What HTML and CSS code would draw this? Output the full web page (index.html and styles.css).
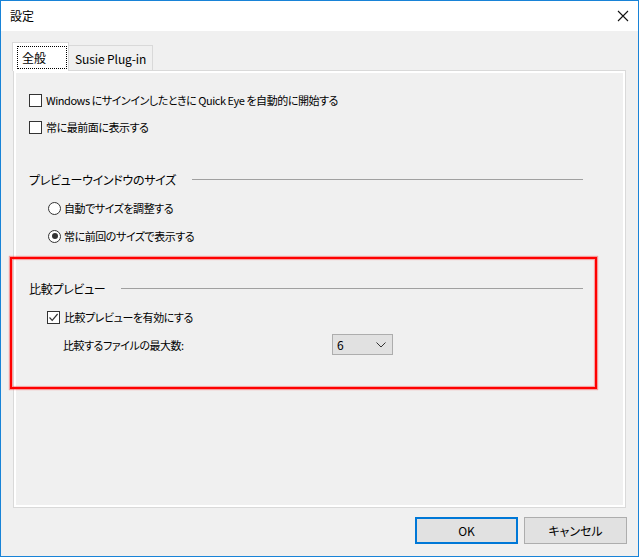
FILE: index.html
```html
<!DOCTYPE html>
<html lang="ja">
<head>
<meta charset="utf-8">
<title>設定</title>
<link rel="stylesheet" href="styles.css">
</head>
<body>
<div class="window">
  <div class="titlebar">
    <span class="title">設定</span>
    <span class="close"><svg width="12" height="12" viewBox="0 0 12 12"><path d="M1 1 L11 11 M11 1 L1 11" stroke="#111" stroke-width="1.1" fill="none"/></svg></span>
  </div>
  <div class="content">
    <div class="tabs">
      <div class="tab active"><span class="focus">全般</span></div>
      <div class="tab">Susie Plug-in</div>
    </div>
    <div class="panel">
      <div class="row first">
        <span class="checkbox"></span>
        <span class="label">Windows にサインインしたときに Quick Eye を自動的に開始する</span>
      </div>
      <div class="row">
        <span class="checkbox"></span>
        <span class="label">常に最前面に表示する</span>
      </div>

      <div class="heading section-gap">
        <span class="heading-text">プレビューウインドウのサイズ</span>
        <span class="rule"></span>
      </div>
      <div class="row sub">
        <span class="radio"></span>
        <span class="label">自動でサイズを調整する</span>
      </div>
      <div class="row sub">
        <span class="radio checked"></span>
        <span class="label">常に前回のサイズで表示する</span>
      </div>

      <div class="heading section-gap">
        <span class="heading-text">比較プレビュー</span>
        <span class="rule"></span>
      </div>
      <div class="row sub">
        <span class="checkbox checked"><svg width="11" height="11" viewBox="0 0 11 11"><path d="M1.5 5.5 L4.2 8.3 L9.6 2" stroke="#333" stroke-width="1.2" fill="none"/></svg></span>
        <span class="label">比較プレビューを有効にする</span>
      </div>
      <div class="row field">
        <span class="field-label">比較するファイルの最大数:</span>
        <span class="select"><span class="select-value">6</span><svg width="10" height="6" viewBox="0 0 10 6"><path d="M0.5 0.5 L5 5 L9.5 0.5" stroke="#333" stroke-width="1" fill="none"/></svg></span>
      </div>
    </div>
    <div class="buttons">
      <button class="btn default">OK</button>
      <button class="btn">キャンセル</button>
    </div>
  </div>
  <div class="highlight"></div>
</div>
</body>
</html>
```

FILE: styles.css
```css
* { box-sizing: border-box; }
html, body {
  margin: 0;
  padding: 0;
  background: #f0f0f0;
}
body {
  font-family: "Noto Sans CJK JP", sans-serif;
  font-feature-settings: "palt" 1;
  font-size: 11px;
  color: #000;
}
.window {
  position: relative;
  width: 639px;
  height: 557px;
  border: 1px solid #1883d7;
  background: #f0f0f0;
  display: flex;
  flex-direction: column;
}
.titlebar {
  height: 30px;
  background: #fff;
  display: flex;
  align-items: center;
  justify-content: space-between;
  padding: 0 9px 0 9px;
}
.title {
  font-size: 12px;
  line-height: 14px;
}
.close {
  display: flex;
  width: 12px;
  height: 12px;
}
.content {
  flex: 1;
  padding: 11px 12px 0 11px;
  display: flex;
  flex-direction: column;
}
.tabs {
  display: flex;
  align-items: flex-end;
  height: 28px;
  position: relative;
  z-index: 1;
}
.tab {
  height: 25px;
  border: 1px solid #d9d9d9;
  border-bottom: none;
  border-left: none;
  background: #f0f0f0;
  padding: 0 0 0 6px;
  display: flex;
  align-items: center;
  font-size: 12px;
  letter-spacing: -0.1px;
  width: 84px;
  white-space: nowrap;
}
.tab.active {
  height: 29px;
  margin-bottom: -1px;
  background: #fff;
  width: 57px;
  border-left: 1px solid #d9d9d9;
  border-right: 1px solid #d9d9d9;
  padding: 2px 1px 2px 4px;
  align-items: stretch;
}
.focus {
  flex: 1;
  border: 1px dotted #000;
  display: flex;
  align-items: center;
  padding-left: 4px;
  margin-top: 1px;
}
.panel {
  margin-left: 1px;
  height: 438px;
  border: 1px solid #d9d9d9;
  background: #f0f0f0;
  box-shadow: inset 0 0 0 2px #fff;
  padding: 19px 42px 0 15px;
  display: flex;
  flex-direction: column;
}
.row {
  display: flex;
  align-items: center;
  height: 20px;
  margin-top: 7px;
}
.row.first { margin-top: 0; }
.row.sub { padding-left: 18px; margin-top: 8px; }
.row.field { padding-left: 34px; margin-top: 7px; height: 21px; }
.label {
  margin-left: 4px;
  line-height: 14px;
  white-space: nowrap;
  letter-spacing: -0.45px;
}
.checkbox {
  width: 13px;
  height: 13px;
  border: 1px solid #333;
  background: #fff;
  display: flex;
  align-items: center;
  justify-content: center;
  flex: none;
}
.radio {
  width: 13px;
  height: 13px;
  border: 1px solid #333;
  border-radius: 50%;
  background: #fff;
  flex: none;
  margin-left: 1px;
  display: flex;
  align-items: center;
  justify-content: center;
}
.radio.checked::after {
  content: "";
  width: 6px;
  height: 6px;
  border-radius: 50%;
  background: #333;
}
.radio + .label { margin-left: 3px; }
.heading {
  display: flex;
  align-items: center;
  height: 20px;
}
.section-gap { margin-top: 33px; }
.heading-text {
  font-size: 12px;
  letter-spacing: -0.3px;
  line-height: 16px;
  white-space: nowrap;
}
.rule {
  flex: 1;
  height: 1px;
  background: #a0a0a0;
  margin-left: 16px;
  margin-top: -1px;
}
.field-label {
  width: 269px;
  line-height: 14px;
  letter-spacing: -0.45px;
}
.select {
  width: 61px;
  height: 21px;
  border: 1px solid #adadad;
  background: #e1e1e1;
  display: flex;
  align-items: center;
  justify-content: space-between;
  padding: 0 6px 0 4px;
  font-size: 12px;
}
.buttons {
  display: flex;
  justify-content: flex-end;
  gap: 6px;
  margin-top: 9px;
  margin-right: -1px;
}
.btn {
  width: 103px;
  height: 27px;
  border: 1px solid #adadad;
  background: #e1e1e1;
  font-family: "Noto Sans CJK JP", sans-serif;
  font-feature-settings: "palt" 1;
  font-size: 12px;
  color: #000;
  padding: 0;
}
.btn.default {
  border: 2px solid #0078d7;
}
.highlight {
  position: absolute;
  left: 9px;
  top: 256px;
  width: 587px;
  height: 132px;
  border: 2px solid #ff0000;
  box-shadow: 0 0 1px 1px rgba(255, 0, 0, 0.35), inset 0 0 1px 1px rgba(255, 0, 0, 0.35);
  pointer-events: none;
}
```
